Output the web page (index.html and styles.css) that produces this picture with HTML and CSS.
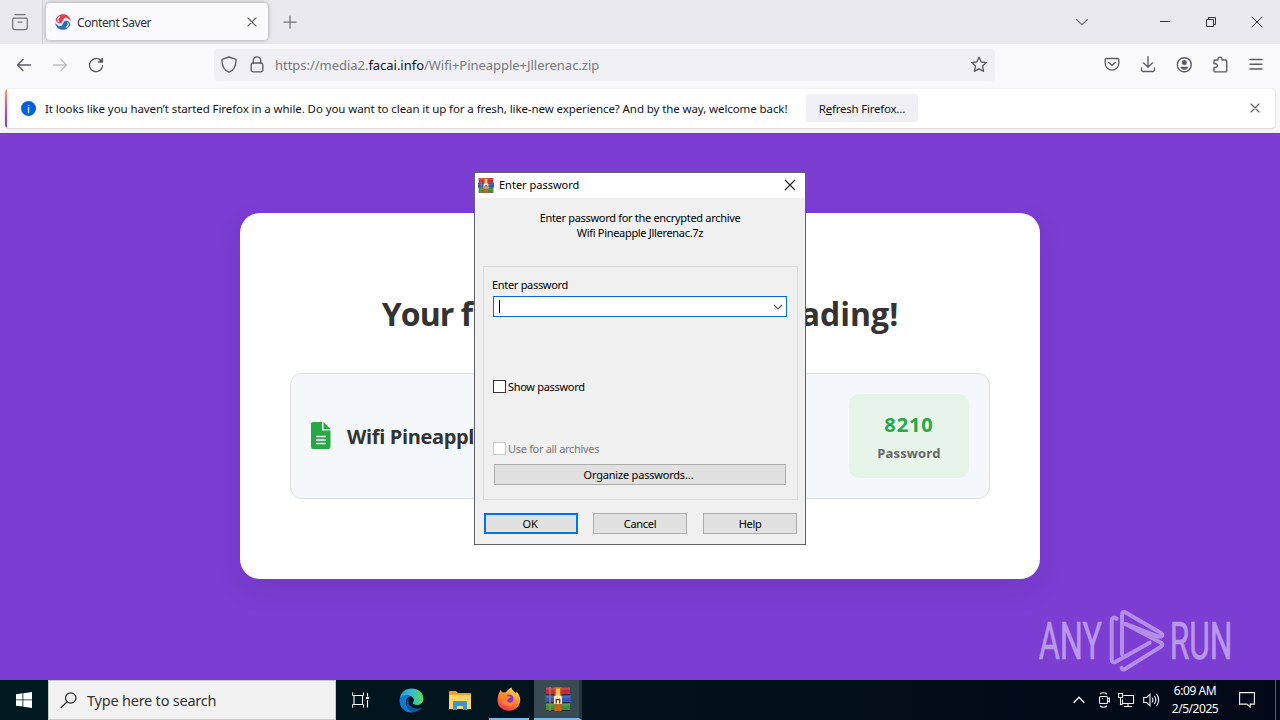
FILE: index.html
```html
<!DOCTYPE html>
<html lang="en">
<head>
<meta charset="utf-8">
<title>Content Saver</title>
<link rel="stylesheet" href="styles.css">
</head>
<body>
<header class="tabstrip">
  <div class="view-button"><svg width="18" height="18" viewBox="0 0 18 18" class="line soft"><path d="M4 1.700h10M2 5.200h14M1.700 6.500v8q0 2 2 2h10.600q2 0 2-2v-8q0-1.300-1.500-1.300H3.200q-1.500 0-1.500 1.300zM7 9h4"/></svg></div>
  <div class="tab">
    <svg class="favicon" width="16" height="16" viewBox="0 0 16 16"><circle cx="8" cy="8" r="7.800" fill="#e3eaf4"/><path d="M.7 6C1.300 2.500 5-.3 9 .3c4 .5 6.600 3.700 6.700 6.700C14 4.600 11.500 3 9.500 4.200 7.500 5.500 8 8.500 5.500 9.200 3 9.800 1.500 8 .7 6z" fill="#e0404f"/><path d="M15.300 10C14.700 13.500 11 16.300 7 15.700 3 15.200.4 12 .3 9c1.700 2.400 4.200 4 6.200 2.800C8.500 10.500 8 7.500 10.500 6.800c2.500-.6 4 1.200 4.800 3.200z" fill="#2c6db5"/><path d="M5 2.500C2.500 4 2 7 4 8M11 13.500c2.500-1.500 3-4.500 1-5.500" fill="none" stroke="#fff" stroke-width="1.100"/></svg>
    <span class="tab-title">Content Saver</span>
    <svg width="10" height="10" viewBox="0 0 10 10" class="line thin"><path d="M1 1l8 8M9 1L1 9"/></svg>
  </div>
  <svg class="new-tab line soft" width="14" height="14" viewBox="0 0 14 14"><path d="M7 1v12M1 7h12"/></svg>
  <div class="window-buttons">
    <svg width="14" height="14" viewBox="0 0 14 14" class="line soft"><path d="M1.500 4.500L7 9.700l5.500-5.200"/></svg>
    <svg width="12" height="12" viewBox="0 0 12 12" class="line crisp"><path d="M1 5.500h10"/></svg>
    <svg width="12" height="12" viewBox="0 0 12 12" class="line crisp"><path d="M1.500 3.500h7v7h-7zM3.500 3.500v-2h7v7h-2"/></svg>
    <svg width="12" height="12" viewBox="0 0 12 12" class="line fine"><path d="M1 1l10 10M11 1L1 11"/></svg>
  </div>
</header>
<nav class="toolbar">
  <svg width="18" height="18" viewBox="0 0 18 18" class="line"><path d="M15.500 9H2.500M8 3.500L2.500 9 8 14.500"/></svg>
  <svg width="18" height="18" viewBox="0 0 18 18" class="line faded"><path d="M2.500 9h13M10 3.500l5.500 5.500-5.500 5.500"/></svg>
  <svg width="18" height="18" viewBox="0 0 18 18" class="line"><path d="M14 4.700A6.600 6.600 0 1 0 15.600 9.700"/><path d="M15.600 2.300v4h-4z" fill="#5b5b66" stroke-width="1"/></svg>
  <div class="urlbar">
    <svg width="18" height="18" viewBox="0 0 18 18" class="line"><path d="M9 1l6.300 2.200q.7.300.7 1C16 10 13.500 14.500 9 16.200 4.500 14.500 2 10 2 4.200q0-.7.700-1z"/></svg>
    <svg width="18" height="18" viewBox="0 0 18 18" class="line"><rect x="3.200" y="7" width="11.600" height="8.800" rx="1.800"/><path d="M5.300 7V4.500a3.700 3.700 0 0 1 7.400 0V7"/></svg>
    <span class="url">https://media2.<b>facai.info</b>/Wifi+Pineapple+Jllerenac.zip</span>
    <svg width="18" height="18" viewBox="0 0 18 18" class="line star"><path d="M9 1.200l2.200 4.800 5.200.6-3.900 3.500 1.100 5.300L9 12.800l-4.600 2.600 1.100-5.300L1.600 6.600l5.200-.6z"/></svg>
  </div>
  <div class="tools">
    <svg width="18" height="18" viewBox="0 0 18 18" class="line"><path d="M3.500 2.500h11q1.300 0 1.300 1.300v3.500a6.800 6.800 0 0 1-13.600 0V3.800Q2.200 2.500 3.500 2.500zM5.700 6.500L9 9.500l3.300-3"/></svg>
    <svg width="18" height="18" viewBox="0 0 18 18" class="line"><path d="M9 .7v10.500M4.700 7L9 11.200 13.300 7M2.500 12v1.700q0 1.800 1.800 1.800h9.400q1.800 0 1.800-1.800V12"/></svg>
    <svg width="18" height="18" viewBox="0 0 18 18" class="line"><circle cx="9.300" cy="8.700" r="7"/><circle cx="9.300" cy="6.500" r="2.500" class="solid"/><path class="solid" d="M5.300 10.700h8q-.7 3-4 3t-4-3z"/></svg>
    <svg width="18" height="18" viewBox="0 0 18 18" class="line"><path d="M7 4V3.100a2 2 0 0 1 4 0V4h3.700q1 0 1 1v9.900q0 1-1 1H4q-1 0-1-1v-3.500h1.500a1.800 1.800 0 0 0 0-3.700H3V5q0-1 1-1z"/></svg>
    <svg width="18" height="18" viewBox="0 0 18 18" class="line"><path d="M3 3.500h12M3 8.200h12M3 13h12"/></svg>
  </div>
</nav>
<section class="notice-area">
  <div class="notice">
    <span class="info">i</span>
    <span class="notice-text">It looks like you haven’t started Firefox in a while. Do you want to clean it up for a fresh, like-new experience? And by the way, welcome back!</span>
    <button class="refresh">R<u>e</u>fresh Firefox…</button>
    <svg width="10" height="10" viewBox="0 0 10 10" class="line notice-close"><path d="M1 1l8 8M9 1L1 9"/></svg>
  </div>
</section>
<main class="page">
  <section class="card">
    <h1 class="headline"><span class="lead">Your fi</span><span class="tight">le has started downlo</span>ading!</h1>
    <div class="file">
      <svg class="doc" width="20" height="27" viewBox="0 0 20 27"><path d="M2 0h9v8.500h8.500V25q0 2-2 2H2q-2 0-2-2V2q0-2 2-2z" fill="#28a745"/><path d="M12.500 0l7 7.200h-7z" fill="#28a745"/><path d="M5 14.500h10M5 18h10M5 21.500h10" stroke="#fff" stroke-width="1.300"/></svg>
      <span class="file-name">Wifi Pineapple Jllerenac</span>
      <div class="password-box"><span class="password">8210</span><span class="password-label">Password</span></div>
    </div>
  </section>
</main>
<svg class="watermark" width="230" height="80" viewBox="0 0 690 240">
  <g class="mark-text"><text x="56" y="178" textLength="190" lengthAdjust="spacingAndGlyphs">ANY</text><text x="449" y="178" textLength="188" lengthAdjust="spacingAndGlyphs">RUN</text></g>
  <path class="mark-line" d="M290 56Q275 47 275 66v112q0 13 12 7l102-57M306 163V45q0-14 12-7l106 62q7 5 0 9l-8 1-97-38M316 72l107 56q8 6 0 12L315 207q-8 4-10-4"/>
</svg>
<section class="dialog">
  <header class="dialog-title">
    <svg width="16" height="15" viewBox="0 0 26 24"><use href="#books"/></svg>
    <span class="dialog-name">Enter password</span>
    <svg width="12" height="12" viewBox="0 0 12 12" class="dialog-close"><path d="M1 1l10 10M11 1L1 11"/></svg>
  </header>
  <p class="prompt"><span>Enter password for the encrypted archive</span><span>Wifi Pineapple Jllerenac.7z</span></p>
  <div class="group">
    <span class="field-label">Enter password</span>
    <div class="combo"><span class="caret"></span><svg width="10" height="6" viewBox="0 0 10 6"><path d="M1 1l4 4 4-4" fill="none" stroke="#555" stroke-width="1.100"/></svg></div>
    <div class="check show"><i class="box"></i><span>Show password</span></div>
    <div class="check all"><i class="box"></i><span>Use for all archives</span></div>
    <button class="push wide">Organize passwords…</button>
  </div>
  <div class="actions"><button class="push primary">OK</button><button class="push">Cancel</button><button class="push help">Help</button></div>
</section>
<footer class="taskbar">
  <div class="start"><svg width="16" height="16" viewBox="0 0 16 16" fill="#fff"><path d="M0 2.200l6.500-.9v6.200H0zM7.300 1.200L16 0v7.500H7.300zM0 8.300h6.500v6.300L0 13.700zM7.300 8.300H16V16l-8.700-1.200z"/></svg></div>
  <div class="search"><svg width="17" height="17" viewBox="0 0 17 17" class="lens"><circle cx="10.700" cy="6" r="5.200"/><path d="M7 9.800L.8 16"/></svg><span class="search-text">Type here to search</span></div>
  <div class="task view"><svg width="17" height="16" viewBox="0 0 17 16" fill="none" stroke="#fff" stroke-width="1.100"><path d="M.5 3.500h11M.5 12.500h11M2 4v8M10.500 4v8M.6 3.500V.5M11.500 3.500V.5M.6 12.500v3M11.500 12.500v3M15.500 1v3.500M15.500 8v7.500"/><path d="M14 5h3v2h-3z" fill="#fff" stroke="none"/></svg></div>
  <div class="task edge"><svg width="25" height="25" viewBox="0 0 25 25"><defs><linearGradient id="eg" x1="0" x2="1"><stop offset="0" stop-color="#249bdc"/><stop offset=".55" stop-color="#36c0c8"/><stop offset="1" stop-color="#67d64a"/></linearGradient></defs><path d="M.7 11C1.500 4.500 6.500.5 12.500.5c7 0 12 4.700 12 10.300 0 4-3 6.200-6.300 6.200-3 0-4.500-1-4.500-1.900 0-.7 1.200-1.200 1.200-3 0-2.400-2.600-4.700-6.200-4.700-4 0-6.500 2-8 3.600z" fill="url(#eg)"/><path d="M.7 11C3 7 8 6.400 11 8.100c-3 1.600-4.500 4-4 7.400.6 4.600 4.700 8 9 8.300-1.100.5-2.300.7-3.500.7C5 24.500-.5 18 .7 11z" fill="#1479ce"/><path d="M11 9.300c-3 3.200-1.800 10.300 6 11.200 2.600.3 4.800-.6 6-1.500-1.500 3-5 5.300-9 5C8 22.500 4.300 14 11 9.300z" fill="#155295"/></svg></div>
  <div class="task folder"><svg width="22" height="19" viewBox="0 0 22 19"><path d="M0 1q0-1 1-1h6l2 2h12q1 0 1 1v14H0z" fill="#e9a22b"/><path d="M0 4h22v14H0z" fill="#fcd462"/><path d="M4 11q0-1 1-1h12q1 0 1 1v8h-4v-4H8v4H4z" fill="#3995d2"/></svg></div>
  <div class="task fox"><svg width="24" height="24" viewBox="0 0 24 24"><defs><linearGradient id="ff" x1=".8" y1="0" x2=".3" y2="1"><stop offset="0" stop-color="#ffe64a"/><stop offset=".5" stop-color="#ff8a29"/><stop offset="1" stop-color="#f22c55"/></linearGradient></defs><path d="M2 6.500L3.500 3l2 2.500L9 5.200C10 3.500 12 1.500 14.500.5c.5 3 3.500 4 4.500 6l.5-2C23 8 24.500 13 22 18c-4 7-15 8-20 1C-.2 15 .3 10 2 6.500z" fill="url(#ff)"/><circle cx="12" cy="12.500" r="5" fill="#7a3bd0"/><path d="M4 8c3-1.500 5-.5 7 1l2.500.5c0 1.800-2 1.800-3 3-1 2 1 3.600 3.500 3 2-.6 3-3 2-6 3.500 2.500 2.500 8-2 9.500C7 20.500 2 14 4 8z" fill="#ff8129"/></svg></div>
  <div class="task rar"><svg width="26" height="24" viewBox="0 0 26 24"><g id="books"><path d="M1 0h24v7.500H1z" fill="#c02a44"/><path d="M0 8h26v7.500H0z" fill="#3259b8"/><path d="M1 16h24v7.500H1z" fill="#3b8f3a"/><path d="M1 2h24M1 10h24M1 18h24" stroke="#ffffff40"/><path d="M1 7.700h24M1 15.700h24M1 23.500h24" stroke="#2a1f24" stroke-width=".8"/><path d="M5 0v24" stroke="#b58a48" stroke-width="1.200"/><path d="M9.500 0h7v24h-7z" fill="#c5631f"/><path d="M11 1.500h4v7h-4z" fill="#ffc34c"/><path d="M9 9.500q4-3 8 0v7.500H9z" fill="#f7e6bd"/><path d="M11.300 16.500v-4h3.400v4" fill="none" stroke="#514332" stroke-width="1.300"/></g></svg></div>
  <div class="tray">
    <svg width="12" height="8" viewBox="0 0 12 8"><path d="M.7 6.700L6 1.300l5.300 5.400"/></svg>
    <svg width="12" height="16" viewBox="0 0 12 16"><path d="M2 2Q5.500-.5 9 2M2 14q3.500 2.500 7 0M2.500 4.500h6q1 0 1 1v5q0 1-1 1h-6q-1 0-1-1v-5q0-1 1-1zM9.500 7l2-1v4l-2-1M4 6.500h1"/></svg>
    <svg width="17" height="16" viewBox="0 0 17 16"><path d="M5.500 3.500h10v8h-11v-4M10 12v2M6 14.500h8M.5 1.500h4v4h-4zM2.500 5.500v7h2"/></svg>
    <svg width="17" height="14" viewBox="0 0 17 14"><path d="M.7 4.500h3L7 1.200v11.600L3.700 9.500h-3zM9 4.500q2 2.500 0 5M11.300 3q3.200 4 0 8M13.500 1.200q4.400 5.800 0 11.600"/></svg>
    <div class="clock"><span class="time">6:09 AM</span><span class="date">2/5/2025</span></div>
    <svg width="16" height="16" viewBox="0 0 16 16"><path d="M.6.600h14.800v11.500h-4.200v3.100L8 12.100H.6z"/></svg>
    <i class="peek"></i>
  </div>
</footer>
</body>
</html>
```
FILE: styles.css
```css
* { box-sizing: border-box; }
body { margin: 0; width: 1280px; height: 720px; overflow: hidden; position: relative; display: flex; flex-direction: column; font-family: "Noto Sans", "Open Sans", sans-serif; color: #15141a; white-space: nowrap; }
svg { display: block; flex: none; }
button { margin: 0; padding: 0; font: inherit; color: inherit; letter-spacing: inherit; white-space: nowrap; }
.line { fill: none; stroke: #5b5b66; stroke-width: 1.35; stroke-linecap: round; stroke-linejoin: round; }
.soft { stroke-width: 1.25; stroke: #74747c; }
.thin { stroke-width: 1.1; }
.faded { stroke: #bdbdc3; }
.crisp { stroke: #333; stroke-width: 1; stroke-linecap: butt; stroke-linejoin: miter; }
.fine { stroke: #333; stroke-width: 1; }
.solid { fill: #5b5b66; stroke: none; }

.tabstrip { flex: none; height: 44px; background: #eae9ee; display: flex; align-items: center; }
.view-button { width: 43px; height: 44px; border-right: 1px solid #cfcfd5; display: flex; align-items: center; padding-left: 11px; }
.tab { width: 222px; height: 37px; margin: -1px 0 0 3px; background: #fbfbfd; border-radius: 4px; box-shadow: 0 0 4px rgba(0,0,0,.35); display: flex; align-items: center; padding: 1px 11px 0 9px; }
.tab-title { margin-left: 6px; flex: 1; font-size: 12px; letter-spacing: -.4px; color: #303038; }
.new-tab { margin-left: 15px; }
.window-buttons { margin-left: auto; display: flex; align-items: center; padding-right: 17px; gap: 34px; }
.window-buttons svg:first-child { margin-right: 36px; }

.toolbar { flex: none; height: 43px; background: #f9f9fb; display: flex; align-items: center; padding: 0 15px 2px; gap: 18px; }
.urlbar { width: 781px; height: 32px; margin: 0 0 0 91px; background: #f0f0f4; border-radius: 4px; display: flex; align-items: center; padding: 0 7px 0 6px; gap: 10px; }
.url { margin-left: -1px; padding-top: 1px; font-size: 13px; letter-spacing: -.03px; color: #77777e; }
.url b { font-weight: 400; color: #15141a; }
.star { margin-left: auto; }
.tools { margin-left: auto; display: flex; gap: 18px; }

.notice-area { flex: none; height: 46px; background: #f8f8f9; padding: 2px 5px 0; border-bottom: 2px solid #f3effb; }
.notice { height: 39px; background: linear-gradient(#ff9b5e, #d8499b 50%, #7c3fbd) left / 2px 100% no-repeat #fff; border-radius: 4px; box-shadow: 0 1px 2px #d5d5d3, 0 0 1px #ccc; display: flex; align-items: center; padding: 0 15px 1px 16px; }
.info { width: 15px; height: 15px; border-radius: 50%; background: #0060df; color: #fff; font-size: 11px; line-height: 15px; text-align: center; }
.notice-text { margin-left: 9px; width: 742px; font-size: 11.500px; letter-spacing: -.09px; }
.refresh { margin-left: 19px; width: 112px; height: 28px; border: 0; border-radius: 4px; background: #f0f0f4; font-size: 11.500px; letter-spacing: -.22px; }
.notice-close { margin-left: auto; stroke-width: 1.1; }

.page { flex: 1; background: #7c3dd3; border-top: 1px solid #7043bd; padding: 79px 240px 0; }
.card { height: 366px; background: #fff; border-radius: 20px; box-shadow: 0 10px 30px rgba(0,0,0,.08); padding: 77px 50px 0; font-family: "Open Sans", "Noto Sans", sans-serif; }
.headline { margin: 0; height: 83px; line-height: 48px; text-align: center; font-size: 32px; font-weight: 700; color: #333; }
.lead { letter-spacing: -.9px; }
.tight { letter-spacing: -1.2px; }
.file { height: 126px; background: #f5f8fa; border: 1px solid #dcdfe3; border-radius: 12px; display: flex; align-items: center; padding: 0 20px; }
.doc { margin-top: -2px; }
.file-name { margin-left: 16px; font-size: 20px; font-weight: 700; letter-spacing: -.35px; color: #333; }
.password-box { margin-left: auto; width: 120px; height: 84px; background: #e7f4e9; border-radius: 10px; display: flex; flex-direction: column; align-items: center; padding-top: 16px; font-weight: 700; }
.password { height: 30px; line-height: 29px; font-size: 20px; color: #28a745; letter-spacing: .9px; }
.password-label { font-size: 13px; line-height: 27px; color: #666; letter-spacing: .15px; }

.watermark { position: absolute; left: 1020px; top: 600px; overflow: visible; }
.mark-text { font: 400 155px Roboto, sans-serif; fill: #bb97ea; stroke: #bb97ea; stroke-width: 2; }
.mark-line { fill: none; stroke: #b58de9; stroke-width: 12; stroke-linecap: round; stroke-linejoin: round; }

.dialog { position: absolute; left: 474px; top: 172px; width: 332px; height: 373px; border: 1px solid #606066; background: #f0f0f0; color: #000; font-size: 11px; letter-spacing: -.31px; }
.dialog-title { height: 25px; background: #fff; display: flex; align-items: center; padding: 0 9px 1px 3px; letter-spacing: 0; }
.dialog-name { margin: -1px 0 0 5px; flex: 1; }
.dialog-close { fill: none; stroke: #222; stroke-width: 1.1; }
.prompt { margin: 12px 0 0; height: 56px; display: flex; flex-direction: column; align-items: center; line-height: 15px; }
.group { margin: 0 7px 0 8px; height: 234px; border: 1px solid #dcdcdc; padding: 10px 10px 0 8px; display: flex; flex-direction: column; }
.field-label { line-height: 16px; }
.combo { height: 21px; margin: 3px 0 0 1px; border: 1px solid #0a6cc0; background: #fff; display: flex; align-items: center; justify-content: space-between; padding: 0 3px 0 5px; }
.caret { width: 1px; height: 13px; margin-top: -1px; background: #000; }
.check { display: flex; align-items: center; gap: 2px; height: 16px; padding-left: 1px; }
.box { width: 13px; height: 13px; border: 1px solid #333; background: #fff; }
.show { margin-top: 61px; }
.all { margin-top: 46px; color: #777; }
.all .box { border-color: #ccc; }
.push { width: 94px; height: 21px; border: 1px solid #adadad; background: #e1e1e1; line-height: 19px; text-align: center; }
.wide { width: 292px; margin: 8px 0 0 2px; padding-right: 3px; letter-spacing: -.2px; }
.primary { border: 2px solid #0078d7; line-height: 17px; padding-right: 2px; }
.actions { margin: 13px 8px 0 9px; display: flex; gap: 15px; }
.help { margin-left: 1px; }

.taskbar { flex: none; height: 40px; background: linear-gradient(90deg, #011a22, #02121c 45%, #020817); display: flex; color: #fff; }
.start { width: 48px; display: flex; align-items: center; justify-content: center; }
.search { width: 288px; background: #f2f2f2; border: 1px solid #c8cacb; display: flex; align-items: center; padding-left: 11px; color: #333; }
.lens { fill: none; stroke: #222; stroke-width: 1.2; }
.search-text { margin-left: 10px; font-size: 14.500px; letter-spacing: -.22px; }
.task { display: flex; align-items: center; justify-content: center; width: 49px; }
.edge { width: 52px; }
.folder { width: 46px; }
.fox { width: 40px; margin-left: 6px; border-bottom: 2px solid #76b9ed; }
.rar { width: 48px; margin-left: 5px; padding-left: 2px; background: #394a53; border-bottom: 2px solid #76b9ed; border-right: 3px solid #26363f; }
.tray { margin-left: auto; display: flex; align-items: center; }
.tray svg { fill: none; stroke: #f2f2f2; stroke-width: 1.1; margin-right: 8px; }
.tray svg:nth-child(1) { margin-right: 13px; stroke-width: 1.4; }
.clock { width: 56px; margin: 0 16px 0 -1px; display: flex; flex-direction: column; align-items: center; line-height: 18px; font-size: 12px; letter-spacing: -.45px; }
.peek { width: 5px; height: 40px; margin-left: 12px; border-left: 1px solid #54606b; }
```
